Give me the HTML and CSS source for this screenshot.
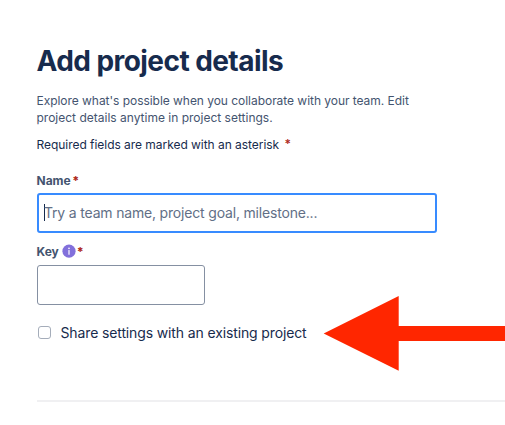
FILE: index.html
```
<!DOCTYPE html>
<html lang="en">
<head>
<meta charset="utf-8">
<title>Add project details</title>
<link rel="stylesheet" href="styles.css">
</head>
<body>
<main class="page">
  <h1 class="title">Add project details</h1>
  <p class="intro"><span class="first-line">Explore what's possible when you collaborate with your team. Edit</span><br>project details anytime in project settings.</p>
  <p class="required">Required fields are marked with an asterisk <span class="star">*</span></p>
  <label class="label name-label">Name<span class="star">*</span></label>
  <div class="field name-field"><span class="caret"></span><span class="placeholder">Try a team name, project goal, milestone...</span></div>
  <label class="label key-label">Key
    <svg class="info" width="14" height="14" viewBox="0 0 14 14"><circle cx="7" cy="7.2" r="6.6" fill="#8270db"/><circle cx="7" cy="4.4" r=".8" fill="#fff"/><path d="M7 6.6v3.6" stroke="#fff" stroke-width="1.2" stroke-linecap="round"/></svg><span class="star">*</span></label>
  <div class="field key-field"></div>
  <div class="share"><span class="box"></span><span>Share settings with an existing project</span></div>
  <hr class="rule">
  <svg class="arrow" width="182" height="76" viewBox="0 0 182 76"><path d="M.7 37.4L75.7 0v30H182v15H75.7v29.8z" fill="#ff2600"/></svg>
</main>
</body>
</html>
```
FILE: styles.css
```
* { box-sizing: border-box; }
body { margin: 0; background: #fff; color: #172b4d; font-family: Inter, sans-serif; }
.page { position: relative; height: 425px; padding: 43px 0 0 37px; overflow: hidden; }
.title { margin: 0 0 0 -0.5px; font-size: 28px; line-height: 36px; font-weight: 650; letter-spacing: -0.56px; white-space: nowrap; }
.intro { margin: 13px 0 0 -0.5px; font-size: 12px; line-height: 17px; color: #44546f; white-space: nowrap; }
.first-line { letter-spacing: -0.04px; }
.required { margin: 10px 0 0 -0.5px; font-size: 12px; line-height: 17px; letter-spacing: -0.04px; white-space: nowrap; }
.star { color: #ae2a19; }
.required .star { margin-left: 2px; font-weight: 600; position: relative; top: -1px; }
.label { display: flex; align-items: center; height: 16px; margin-left: -0.5px; font-size: 12px; font-weight: 650; color: #44546f; }
.name-label { margin-top: 19px; }
.label .star { margin-left: 1.5px; font-weight: 800; }
.field { display: flex; align-items: center; height: 40px; border: 1px solid #8590a2; border-radius: 3px; }
.name-field { width: 400px; margin-top: 5px; padding: 0 0 2px 5px; border: 2px solid #388bff; font-size: 14px; letter-spacing: -0.18px; color: #626f86; white-space: nowrap; }
.caret { width: 1px; height: 17px; margin-right: -1px; background: #172b4d; }
.key-label { margin-top: 10px; }
.info { margin-left: 3.5px; }
.key-label .star { margin-left: 0.5px; }
.key-field { width: 168px; margin-top: 6px; }
.share { display: flex; align-items: center; height: 20px; margin-top: 17px; font-size: 14px; letter-spacing: -0.13px; white-space: nowrap; }
.box { width: 13px; height: 13px; margin: 1px 9.5px 0 1px; border: 1px solid #a5adba; border-radius: 3px; }
.rule { height: 2px; margin: 58px 0 0; border: 0; background: #f0f0f2; }
.arrow { position: absolute; left: 323px; top: 296px; }
```
